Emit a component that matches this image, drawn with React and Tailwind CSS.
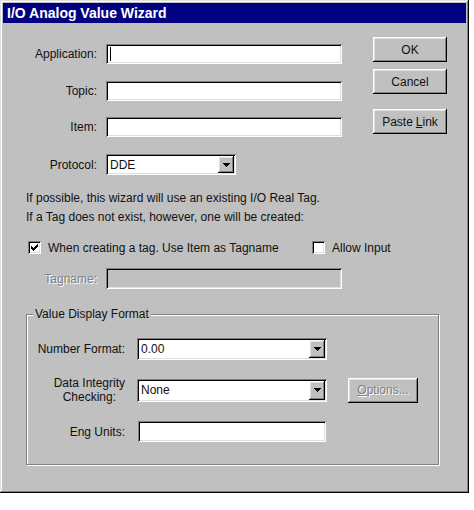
import React from "react";

// Classic 3D bevels
const raisedWindow =
  "shadow-[inset_-1px_-1px_0_#000,inset_1px_1px_0_#dfdfdf,inset_-2px_-2px_0_#808080,inset_2px_2px_0_#fff]";
const raisedButton =
  "shadow-[inset_-1px_-1px_0_#000,inset_1px_1px_0_#fff,inset_-2px_-2px_0_#808080,inset_2px_2px_0_#dfdfdf]";
const sunken =
  "shadow-[inset_1px_1px_0_#808080,inset_-1px_-1px_0_#fff,inset_2px_2px_0_#000,inset_-2px_-2px_0_#dfdfdf]";

function Button({ className = "", disabled, children }) {
  return (
    <div
      className={`flex items-center justify-center bg-[#c0c0c0] ${raisedButton} ${
        disabled ? "text-[#808080] [text-shadow:1px_1px_0_#fff]" : ""
      } ${className}`}
    >
      {children}
    </div>
  );
}

function TextBox({ className = "", disabled, caret, children }) {
  return (
    <div
      className={`flex items-center pl-[4px] ${sunken} ${
        disabled ? "bg-[#c0c0c0]" : "bg-white"
      } ${className}`}
    >
      {caret && <div className="w-px h-[14px] bg-black" />}
      {children}
    </div>
  );
}

function DownArrow() {
  return (
    <svg width="7" height="4" viewBox="0 0 7 4" shapeRendering="crispEdges">
      <path d="M0 0h7v1H0zM1 1h5v1H1zM2 2h3v1H2zM3 3h1v1H3z" fill="#000" />
    </svg>
  );
}

function Combo({ className = "", value }) {
  return (
    <div className={`flex items-stretch bg-white p-[2px] ${sunken} ${className}`}>
      <div className="flex-1 flex items-center pl-[2px]">{value}</div>
      <div className={`w-[16px] flex items-center justify-center bg-[#c0c0c0] ${raisedButton}`}>
        <DownArrow />
      </div>
    </div>
  );
}

function CheckBox({ checked }) {
  return (
    <div className={`w-[13px] h-[13px] bg-white flex items-center justify-center ${sunken}`}>
      {checked && (
        <svg width="7" height="7" viewBox="0 0 7 7" shapeRendering="crispEdges">
          <path
            d="M6 0h1v1H6zM5 1h2v1H5zM0 2h1v1H0zM4 2h3v1H4zM0 3h2v1H0zM3 3h3v1H3zM0 4h5v1H0zM1 5h3v1H1zM2 6h1v1H2z"
            fill="#000"
          />
        </svg>
      )}
    </div>
  );
}

function FieldRow({ label, disabled, className = "", children }) {
  return (
    <div className={`flex items-center gap-[9px] ${className}`}>
      <div
        className={`w-[94px] text-right ${
          disabled ? "text-[#808080] [text-shadow:1px_1px_0_#fff]" : ""
        }`}
      >
        {label}
      </div>
      {children}
    </div>
  );
}

export default function App() {
  return (
    <div className="w-[474px] h-[510px] bg-white font-['Liberation_Sans',Arial,sans-serif] text-[12px] leading-[14px] text-[#111]">
      <div className={`w-[469px] h-[493px] bg-[#c0c0c0] p-[3px] flex flex-col ${raisedWindow}`}>
        {/* Title bar */}
        <div className="h-[20px] bg-[#000080] text-white font-bold text-[14px] leading-[20px] pl-[4px]">
          I/O Analog Value Wizard
        </div>

        {/* Connection fields and command buttons */}
        <div className="flex">
          <div className="w-[339px] pt-[21px] flex flex-col">
            <FieldRow label="Application:">
              <TextBox className="w-[236px] h-[20px]" caret />
            </FieldRow>
            <FieldRow label="Topic:" className="mt-[17px]">
              <TextBox className="w-[236px] h-[20px]" />
            </FieldRow>
            <FieldRow label="Item:" className="mt-[16px]">
              <TextBox className="w-[236px] h-[20px]" />
            </FieldRow>
            <FieldRow label="Protocol:" className="mt-[17px]">
              <Combo className="w-[130px] h-[21px]" value="DDE" />
            </FieldRow>
          </div>
          <div className="ml-[31px] pt-[14px] flex flex-col">
            <Button className="w-[74px] h-[25px]">OK</Button>
            <Button className="w-[74px] h-[25px] mt-[7px]">Cancel</Button>
            <Button className="w-[74px] h-[25px] mt-[15px]">
              Paste <span className="underline ml-[3px]">L</span>ink
            </Button>
          </div>
        </div>

        {/* Explanation */}
        <div className="ml-[23px] mt-[14px] leading-[19px]">
          <div>If possible, this wizard will use an existing I/O Real Tag.</div>
          <div>If a Tag does not exist, however, one will be created:</div>
        </div>

        {/* Options */}
        <div className="flex items-center h-[15px] mt-[13px] ml-[25px]">
          <div className="w-[284px] flex items-center gap-[7px]">
            <CheckBox checked />
            <span>When creating a tag. Use Item as Tagname</span>
          </div>
          <div className="flex items-center gap-[7px]">
            <CheckBox />
            <span>Allow Input</span>
          </div>
        </div>

        <FieldRow label="Tagname:" disabled className="mt-[13px]">
          <TextBox className="w-[236px] h-[21px]" disabled />
        </FieldRow>

        {/* Value Display Format group */}
        <fieldset className="ml-[23px] mt-[18px] w-[413px] h-[158px] border border-[#808080] shadow-[1px_1px_0_#fff,inset_1px_1px_0_#fff]">
          <legend className="ml-[6px] px-[2px] bg-[#c0c0c0] leading-[14px]">Value Display Format</legend>

          <div className="flex items-center gap-[12px] mt-[17px]">
            <div className="w-[98px] text-right">Number Format:</div>
            <Combo className="w-[190px] h-[22px]" value="0.00" />
          </div>

          <div className="flex items-center gap-[12px] mt-[16px]">
            <div className="w-[98px] flex justify-end">
              <div className="text-center">
                Data Integrity
                <br />
                Checking:
              </div>
            </div>
            <Combo className="w-[190px] h-[23px]" value="None" />
            <Button disabled className="w-[70px] h-[25px] ml-[9px]">
              <span className="underline">O</span>ptions...
            </Button>
          </div>

          <div className="flex items-center gap-[12px] mt-[17px]">
            <div className="w-[98px] text-right">Eng Units:</div>
            <TextBox className="w-[188px] h-[21px] ml-[1px]" />
          </div>
        </fieldset>
      </div>
    </div>
  );
}
